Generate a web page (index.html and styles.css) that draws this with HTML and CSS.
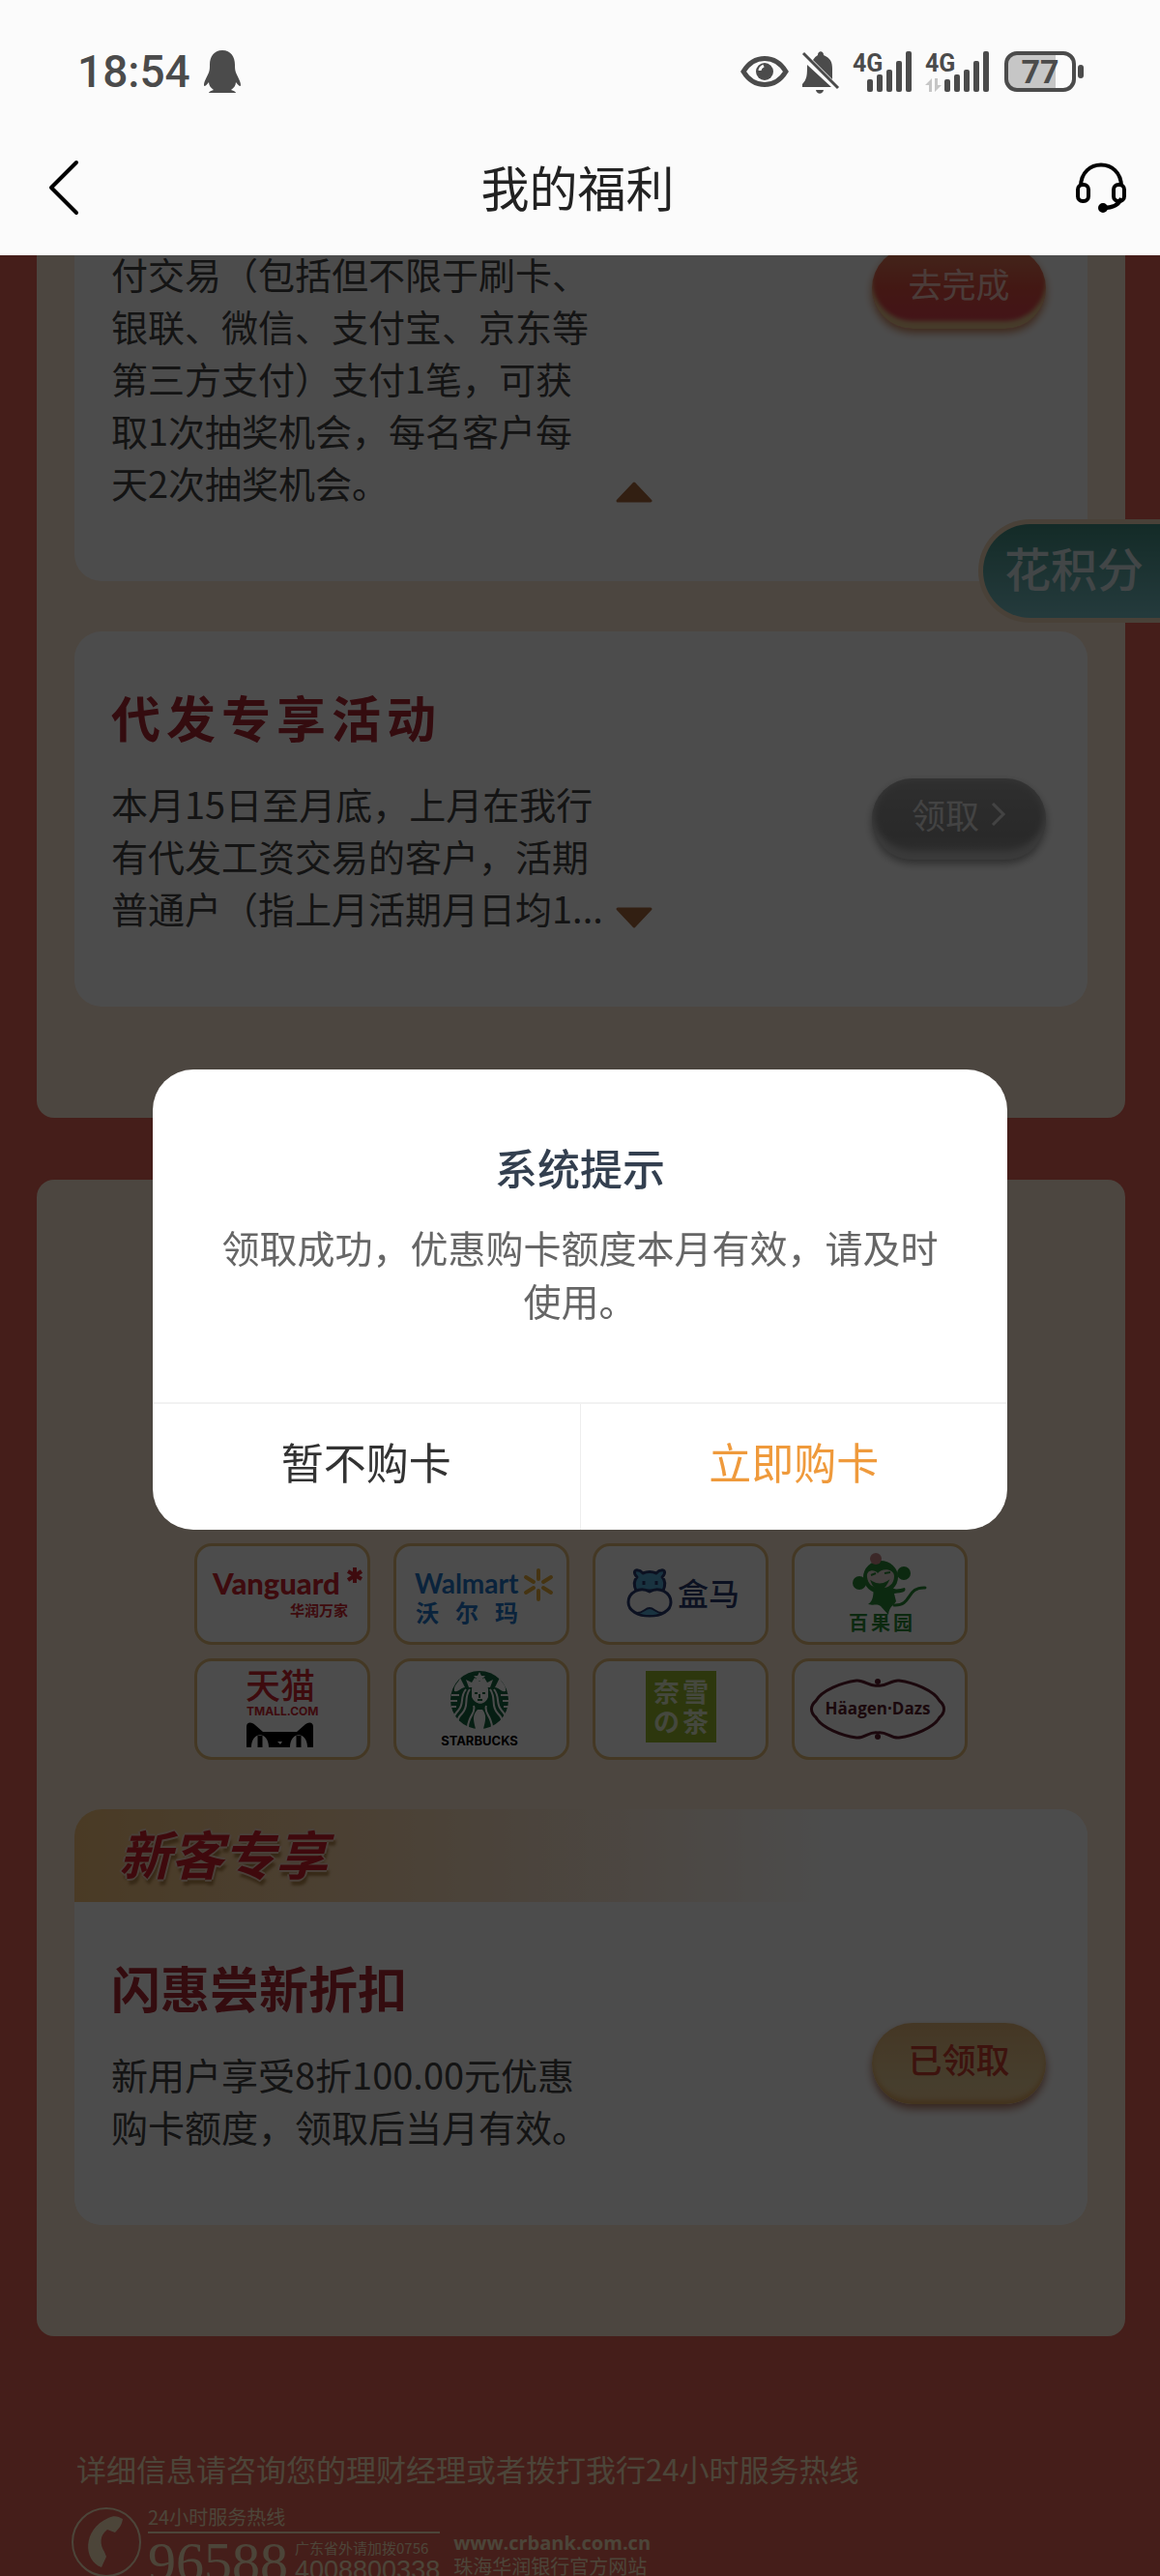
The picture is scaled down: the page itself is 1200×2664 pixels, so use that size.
FILE: index.html
```html
<!DOCTYPE html>
<html lang="zh-CN">
<head>
  <meta charset="UTF-8">
  <meta name="viewport" content="width=device-width, initial-scale=1">
  <title>我的福利</title>
  <link rel="stylesheet" href="styles.css">
</head>
<body>
<div class="app">
  <header class="header">
    <div class="status-bar">
      <span class="time">18:54</span>
      <svg class="qq" width="40" height="46" viewBox="0 0 40 46">
        <path d="M20 1C11 1 7 8 7 16c0 3 0 5-1 8-2 5-5 9-5 13 0 2 2 1 5-3 0 3 2 6 5 8-3 1-5 2-5 3h28c0-1-2-2-5-3 3-2 5-5 5-8 3 4 5 5 5 3 0-4-3-8-5-13-1-3-1-5-1-8 0-8-4-15-13-15z" fill="#4b4b4b"/>
      </svg>
      <div class="status-icons">
        <svg width="50" height="46" viewBox="0 0 50 46" fill="none" stroke="#4b4b4b">
          <path d="M3 23C14 5 36 5 47 23 36 41 14 41 3 23z" stroke-width="5"/>
          <circle cx="25" cy="23" r="9" fill="#4b4b4b" stroke="none"/>
          <path d="M20 22c0-3 2-4 4-5" stroke="#fbfbfb" stroke-width="3"/>
        </svg>
        <svg width="40" height="46" viewBox="0 0 40 46" fill="#4b4b4b">
          <path d="M12 11a13 13 0 0 1 5-5c0-5 6-5 6 0 7 3 9 7 9 14v11z"/>
          <path d="M6 16l25 23H1v-3c5-5 5-10 5-20z"/>
          <path d="M15 42h8c-1 5-7 5-8 0z"/>
          <path d="M2 4l36 36" stroke="#4b4b4b" stroke-width="3"/>
        </svg>
        <svg width="62" height="46" viewBox="0 0 62 46" fill="#4b4b4b">
          <text class="net" x="0" y="23">4G</text>
          <rect x="15" y="31" width="6" height="13" rx="2"/><rect x="25" y="26" width="6" height="18" rx="2"/><rect x="35" y="21" width="6" height="23" rx="2"/><rect x="45" y="12" width="6" height="32" rx="2"/><rect x="55" y="2" width="6" height="42" rx="2"/>
        </svg>
        <svg width="68" height="46" viewBox="0 0 68 46" fill="#4b4b4b">
          <text class="net" x="0" y="23">4G</text>
          <path d="M7 30v14H4v-7H0zM10 44V30h3v7h4z" fill="#c6c6c6"/>
          <rect x="20" y="31" width="6" height="13" rx="2"/><rect x="30" y="26" width="6" height="18" rx="2"/><rect x="40" y="21" width="6" height="23" rx="2"/><rect x="50" y="12" width="6" height="32" rx="2"/><rect x="60" y="2" width="6" height="42" rx="2"/>
        </svg>
        <svg width="84" height="46" viewBox="0 0 84 46">
          <path d="M12 4h42v38H12a8 8 0 0 1-8-8V12a8 8 0 0 1 8-8z" fill="#c6c6c6"/>
          <rect x="3" y="4" width="70" height="38" rx="11" fill="none" stroke="#4b4b4b" stroke-width="4"/>
          <rect x="77" y="16" width="6" height="14" rx="3" fill="#4b4b4b"/>
          <text class="level" x="38" y="35" text-anchor="middle">77</text>
        </svg>
      </div>
    </div>
    <nav class="nav">
      <button class="nav-btn" aria-label="返回">
        <svg width="34" height="60" viewBox="0 0 34 60" fill="none" stroke="#000" stroke-width="4" stroke-linecap="round" stroke-linejoin="round"><path d="M30 4L4 30l26 26"/></svg>
      </button>
      <h1>我的福利</h1>
      <button class="nav-btn" aria-label="客服">
        <svg width="54" height="54" viewBox="0 0 54 54" fill="none" stroke="#000" stroke-width="4">
          <path d="M6 26C6 -4 48 -4 48 26M48 38c-2 6-8 10-19 10"/>
          <rect x="3" y="24" width="11" height="17" rx="5"/>
          <rect x="40" y="24" width="11" height="17" rx="5"/>
          <circle cx="29" cy="48" r="4" fill="#000" stroke-width="2"/>
        </svg>
      </button>
    </nav>
  </header>

  <main class="page">
    <section class="panel panel-tasks">
      <article class="card card-cut">
        <div class="info">
          <div class="desc-row">
            <p>付交易（包括但不限于刷卡、银联、微信、支付宝、京东等第三方支付）支付1笔，可获取1次抽奖机会，每名客户每天2次抽奖机会。</p>
            <svg class="arrow" width="38" height="22" viewBox="0 0 38 22"><path d="M19 2L36 20H2z"/></svg>
          </div>
        </div>
        <button class="pill pill-red">去完成</button>
      </article>
      <article class="card">
        <div class="info">
          <h2 class="spaced">代发专享活动</h2>
          <div class="desc-row">
            <p>本月15日至月底，上月在我行有代发工资交易的客户，活期普通户（指上月活期月日均1...</p>
            <svg class="arrow" width="38" height="22" viewBox="0 0 38 22"><path d="M19 20L2 2h34z"/></svg>
          </div>
        </div>
        <button class="pill pill-gray">领取
          <svg width="16" height="26" viewBox="0 0 16 26" fill="none" stroke="currentColor" stroke-width="3"><path d="M2 2l11 11L2 24"/></svg>
        </button>
      </article>
    </section>

    <section class="panel panel-cards">
      <div class="brands">
        <div class="brand">
          <svg viewBox="0 0 176 99">
            <g fill="#cf2530">
              <text class="vanguard" x="16" y="50" font-size="31">Vanguard</text>
              <text x="96" y="72" font-size="15" font-weight="700">华润万家</text>
            </g>
            <path d="M163 22v16M156 26l14 8M156 35l14-9" stroke="#cf2530" stroke-width="4"/>
          </svg>
        </div>
        <div class="brand">
          <svg viewBox="0 0 176 99">
            <g fill="#2276c9">
              <text class="walmart" x="19" y="49" font-size="28">Walmart</text>
              <text x="20 61 102" y="78" font-size="24" font-weight="700">沃尔玛</text>
            </g>
            <path d="M147 25v9M147 46v9M134 32l8 5M152 43l8 5M160 32l-8 5M142 43l-8 5" stroke="#e9b03c" stroke-width="4" stroke-linecap="round"/>
          </svg>
        </div>
        <div class="brand">
          <svg viewBox="0 0 176 99">
            <g stroke="#283b70" stroke-width="3" stroke-linejoin="round">
              <path d="M42 46c-3-7-2-11 1-14-4-4-3-8 1-7 3 0 4 2 5 3 5-2 9-2 14 0 1-1 2-3 5-3 4-1 5 3 1 7 3 3 4 7 1 14z" fill="#56acd8"/>
              <path d="M56 47c10-6 22 1 22 11 0 9-10 14-22 14s-22-5-22-14c0-10 12-17 22-11z" fill="#fff"/>
              <path d="M43 69c7 0 8-5 13-5s6 5 13 5c-7 4-19 4-26 0z" fill="#56acd8" stroke-width="2"/>
            </g>
            <path d="M50 36v4M63 36v4" stroke="#283b70" stroke-width="3"/>
            <text x="85" y="61" font-size="32" font-weight="500" fill="#283b70">盒马</text>
          </svg>
        </div>
        <div class="brand">
          <svg viewBox="0 0 176 99">
            <g fill="#298b38">
              <circle cx="67" cy="38" r="7"/><circle cx="113" cy="28" r="7"/>
              <ellipse cx="89" cy="32" rx="18" ry="17"/>
              <path d="M82 44c6 5 13 3 17-2 5 4 9 2 15 1 2 4-2 5-11 6l2 8c-3 5-7 5-8 14l-8-9c-5-3-6 0-13-2 6-4 5-10 6-16z"/>
            </g>
            <path d="M103 61c19 1 12-19 32-18" fill="none" stroke="#298b38" stroke-width="3" stroke-linecap="round"/>
            <path d="M75 32c-1-8 8-8 11-4 4-6 17-5 17 3 0 9-7 13-15 12-8 0-12-4-13-11z" fill="#e5d8d4"/>
            <circle cx="84" cy="13" r="6" fill="#c98787"/>
            <path d="M80 37q8 5 16 0-4 8-9 7-5-1-7-7zM79 30l5-2M93 28l6-1" fill="#298b38" stroke="#298b38" stroke-width="2"/>
            <text x="56 79 102" y="87" font-size="20" font-weight="700" fill="#298b38">百果园</text>
          </svg>
        </div>
        <div class="brand">
          <svg viewBox="0 0 176 99">
            <g fill="#cf2530">
              <text x="50" y="39" font-size="36" font-weight="500">天猫</text>
              <text class="latin" x="51" y="56" font-size="12">TMALL.COM</text>
            </g>
            <path d="M51 89V68c0-6 6-5 9-2l8 7h35l8-7c3-3 9-4 9 2v21z" fill="#000"/>
            <path d="M56 89c0-17 18-17 18 0zM96 89c0-17 18-17 18 0zM83 83h5l-2 3z" fill="#fff"/>
            <path d="M65 77v12M105 77v12" stroke="#000" stroke-width="5"/>
          </svg>
        </div>
        <div class="brand">
          <svg viewBox="0 0 176 99">
            <circle cx="86" cy="40" r="30" fill="#176440"/>
            <g fill="none" stroke="#fff" stroke-width="2">
              <path d="M76 29c-7 10 0 17-8 25s-3 11-3 12M72 29c-7 9-1 14-8 22s-4 8-4 10M97 29c7 10 0 17 8 25s3 11 3 12M101 29c7 9 1 14 8 22s4 8 4 10M80 46c3 8-6 10-6 23M93 46c-3 8 6 10 6 23M57 35h8M56 41h7M57 47h5M108 35h8M110 41h7M111 47h5"/>
            </g>
            <path d="M78 29c0-8 17-8 17 0v8c-3 9-13 9-17 0zM84 50h5c5 6 3 12 1 20h-8c-2-8-4-14 2-20zM75 27l-3-8 6 3 3-5 5 4 5-4 3 5 6-3-3 8zM60 31c-1-7 5-9 6-14l5 10c-4 0-6 5-11 4zM113 31c1-7-5-9-6-14l-5 10c4 0 6 5 11 4zM86 11l2 4h4l-3 3 1 4-4-2-4 2 1-4-3-3h4z" fill="#fff"/>
            <path d="M81 33h3M89 33h3M84 40h5M86 34v4" stroke="#176440" stroke-width="2"/>
            <text class="latin" x="86" y="87" font-size="13" text-anchor="middle">STARBUCKS</text>
          </svg>
        </div>
        <div class="brand">
          <svg viewBox="0 0 176 99">
            <rect x="52" y="10" width="73" height="74" fill="#96ba2c"/>
            <g font-size="27" font-weight="700" fill="#e8f0d0"><text x="60 90" y="42">奈雪</text><text x="60 90" y="73">の茶</text></g>
          </svg>
        </div>
        <div class="brand">
          <svg viewBox="0 0 176 99">
            <path d="M86 25c-8 2-14-6-22-5-15 2-36 10-42 21-6 5-6 12 0 17 6 11 27 19 42 21 8 1 14-7 22-5 8-2 14 6 22 5 15-2 36-10 42-21 6-5 6-12 0-17-6-11-27-19-42-21-8-1-14 7-22 5z" fill="none" stroke="#5c1d2c" stroke-width="3"/>
            <circle cx="86" cy="21" r="3" fill="#5c1d2c"/><circle cx="86" cy="78" r="3" fill="#5c1d2c"/>
            <text class="haagen" x="86" y="55" font-size="17" text-anchor="middle">Häagen·Dazs</text>
          </svg>
        </div>
      </div>

      <article class="card-wrap">
        <div class="ribbon"><span>新客专享</span></div>
        <div class="card">
          <div class="info">
            <h2>闪惠尝新折扣</h2>
            <div class="desc-row">
              <p>新用户享受8折100.00元优惠购卡额度，领取后当月有效。</p>
            </div>
          </div>
          <button class="pill pill-gold">已领取</button>
        </div>
      </article>
    </section>

    <footer class="footer">
      <p>详细信息请咨询您的理财经理或者拨打我行24小时服务热线</p>
      <div class="hotline">
        <svg width="74" height="74" viewBox="0 0 74 74">
          <circle cx="37" cy="37" r="35" fill="none" stroke="currentColor" stroke-width="2"/>
          <path d="M39 12c6-3 10-2 15 1-1 6-3 9-8 14l-8-3c-8 6-8 15-3 23l2 5-5 11c-19-7-20-39 7-51z" fill="currentColor"/>
        </svg>
        <div class="phones">
          <div class="phones-title">24小时服务热线</div>
          <div class="phones-row">
            <strong>96588</strong>
            <div class="outside"><span>广东省外请加拨0756</span><b>4008800338</b></div>
          </div>
        </div>
        <div class="site"><a href="#">www.crbank.com.cn</a><span>珠海华润银行官方网站</span></div>
      </div>
    </footer>

    <a class="points" href="#">花积分</a>
  </main>

  <div class="mask">
    <div class="dialog" role="dialog" aria-labelledby="dialogTitle">
      <div class="dialog-body">
        <h3 id="dialogTitle">系统提示</h3>
        <p>领取成功，优惠购卡额度本月有效，请及时使用。</p>
      </div>
      <div class="dialog-actions">
        <button>暂不购卡</button>
        <button class="primary">立即购卡</button>
      </div>
    </div>
  </div>
</div>
</body>
</html>
```
FILE: styles.css
```css
* { box-sizing: border-box; }

body {
  margin: 0;
  font-family: "Noto Sans CJK SC", sans-serif;
  color: #444;
}

h1, h2, h3, p { margin: 0; }

button {
  padding: 0;
  border: 0;
  background: none;
  font-family: inherit;
  color: inherit;
}

svg {
  display: block;
  flex-shrink: 0;
  overflow: visible;
}

.app {
  height: 100vh;
  display: flex;
  flex-direction: column;
  overflow: hidden;
}

/* header */
.header {
  position: relative;
  z-index: 20;
  flex-shrink: 0;
  background: #fbfbfb;
}

.status-bar {
  display: flex;
  align-items: center;
  height: 124px;
  padding: 24px 78px 0 80px;
}

.time {
  font: 500 46px/54px Roboto, sans-serif;
  color: #4b4b4b;
}

.qq { margin-left: 13px; }

.status-icons {
  display: flex;
  gap: 13px;
  margin-left: auto;
}

.net { font: 700 25px Roboto, sans-serif; }
.level { font: 700 34px Roboto, sans-serif; fill: #4b4b4b; }

.nav {
  display: flex;
  justify-content: space-between;
  align-items: center;
  height: 140px;
  padding: 0 34px 0 49px;
}

.nav-btn { display: flex; }

.nav h1 {
  padding-bottom: 4px;
  font-size: 50px;
  font-weight: 400;
  line-height: 70px;
  color: #222;
}

/* page */
.page {
  position: relative;
  flex: 1;
  min-height: 0;
  overflow: hidden;
  background: #e66457;
}

.panel {
  margin: 0 36px 0 38px;
  padding: 0 39px 115px;
  border-radius: 18px;
  background: #fdead6;
}

.panel-tasks {
  margin-top: -8px;
  border-top-left-radius: 0;
  border-top-right-radius: 0;
}

.panel-cards {
  margin-top: 64px;
  padding-top: 376px;
}

.card {
  display: flex;
  justify-content: space-between;
  align-items: center;
  padding: 58px 43px 75px 38px;
  border-radius: 28px;
  background: #fff;
}

.card + .card { margin-top: 52px; }

.card-cut {
  align-items: flex-start;
  padding-top: 0;
  border-top-left-radius: 0;
  border-top-right-radius: 0;
}

.card h2 {
  margin-bottom: 33px;
  font-size: 51px;
  font-weight: 700;
  line-height: 60px;
  color: #b02834;
}

.card h2.spaced { letter-spacing: 6px; }

.desc-row {
  display: flex;
  align-items: flex-end;
  gap: 10px;
}

.desc-row p {
  width: 512px;
  font-size: 38px;
  line-height: 54px;
}

.arrow {
  margin-bottom: 6px;
  fill: #a8683c;
  stroke: #a8683c;
  stroke-width: 3;
  stroke-linejoin: round;
}

.pill {
  display: flex;
  justify-content: center;
  align-items: center;
  gap: 12px;
  width: 180px;
  height: 84px;
  margin-top: 16px;
  padding-bottom: 10px;
  border-radius: 42px;
  font-size: 35px;
  line-height: 50px;
}

.card-cut .pill { margin-top: 0; }

.pill-red {
  background: linear-gradient(#e0805c, #e05042 50%, #e24056);
  color: #fbc9c0;
  box-shadow: inset 0 -8px 4px #eac58c, 0 4px 8px #d0865c;
}

.pill-gray {
  background: linear-gradient(#9c9c9c, #8a8a8a 70%, #989898);
  color: #e2e2e2;
  box-shadow: inset 0 -9px 7px #c2c2c2, inset 0 0 9px #bcbcbc, 0 4px 8px #999;
}

.pill-gold {
  background: linear-gradient(#e5b87b, #ecd098 75%, #f0ca92);
  color: #cb402f;
  font-weight: 500;
  box-shadow: inset 0 -4px 5px #e0aa62, 0 5px 8px #b57c68;
}

/* brands */
.brands {
  display: grid;
  grid-template-columns: repeat(4, 182px);
  justify-content: center;
  gap: 14px 24px;
  margin-bottom: 51px;
}

.brand {
  height: 105px;
  border: 3px solid #e4bc78;
  border-radius: 18px;
  background: #fff;
}

.vanguard { font-family: Lato, sans-serif; font-weight: 900; }
.walmart { font-family: Lato, sans-serif; font-weight: 700; }
.latin { font-family: Inter, sans-serif; font-weight: 700; }
.haagen { font-family: "Open Sans", sans-serif; font-weight: 700; fill: #5c1d2c; }

.card-wrap {
  overflow: hidden;
  border-radius: 28px;
  background: #fff;
}

.ribbon {
  height: 96px;
  padding: 10px 46px;
  background: linear-gradient(90deg, #f8c47c, #fce4cb 45%, #fff 75%);
}

.ribbon span {
  font-size: 54px;
  font-style: italic;
  font-weight: 700;
  line-height: 70px;
  color: #d2202c;
  text-shadow: 2px 0 #f7d6c0, -2px 0 #f7d6c0, 0 2px #f7d6c0, 0 -2px #f7d6c0, 2px 6px 3px #b4884c;
}

/* footer */
.footer {
  padding: 114px 73px 0;
  color: #ffe6c0;
}

.footer p {
  padding-left: 6px;
  font-size: 31px;
  line-height: 46px;
}

.hotline {
  display: flex;
  gap: 6px;
  margin-top: 16px;
}

.phones-title {
  padding-bottom: 4px;
  border-bottom: 2px solid;
  font-size: 20px;
  line-height: 22px;
}

.phones-row {
  display: flex;
  gap: 7px;
}

.phones-row strong {
  font: 400 58px/60px "Liberation Serif", serif;
}

.outside, .site {
  display: flex;
  flex-direction: column;
}

.outside { padding-top: 6px; }
.outside span { font-size: 15px; line-height: 18px; }
.outside b { font: 400 27px/28px "Liberation Sans", sans-serif; }

.site {
  margin-left: 8px;
  padding-top: 26px;
  font-size: 20px;
  line-height: 24px;
}

.site a {
  font-family: "Open Sans", sans-serif;
  font-weight: 700;
  color: inherit;
  text-decoration: none;
}

/* floating entry on the right edge */
.points {
  position: absolute;
  top: 273px;
  right: 0;
  padding: 10px 17px 18px 22px;
  border: 5px solid #f3dabb;
  border-right: 0;
  border-radius: 54px 0 0 54px;
  background: linear-gradient(#439084, #7bc4cb);
  font-size: 48px;
  font-weight: 500;
  line-height: 69px;
  color: #dcecee;
  text-decoration: none;
}

/* dialog */
.mask {
  position: fixed;
  inset: 0;
  z-index: 10;
  display: flex;
  justify-content: center;
  align-items: center;
  padding-top: 24px;
  background: rgba(0, 0, 0, 0.7);
}

.dialog {
  width: 884px;
  max-width: 90%;
  overflow: hidden;
  border-radius: 42px;
  background: #fff;
  text-align: center;
}

.dialog-body { padding: 70px 70px 78px; }

.dialog h3 {
  margin-bottom: 24px;
  font-size: 44px;
  font-weight: 500;
  line-height: 62px;
  color: #333f4f;
}

.dialog p {
  font-size: 39px;
  line-height: 55px;
  color: #666;
}

.dialog-actions {
  display: flex;
  border-top: 2px solid #f2f2f2;
}

.dialog-actions button {
  flex: 1;
  height: 130px;
  padding-bottom: 12px;
  font-size: 44px;
  line-height: 60px;
  color: #333;
}

.dialog-actions button + button { border-left: 1px solid #eee; }
.dialog-actions .primary { color: #ef9a3c; }
```
